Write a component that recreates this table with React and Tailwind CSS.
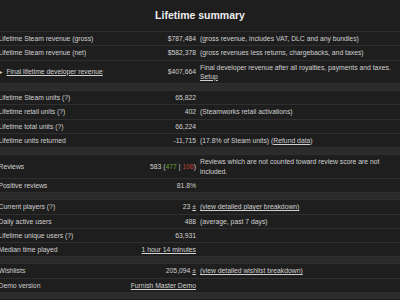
const Row = ({ label, value, desc }) => (
  <div className="flex items-center border-t border-[#2f2f2f] py-[2px] leading-[9.3px]">
    <div className="flex-1 -ml-[1.5px] whitespace-nowrap">{label}</div>
    <div className="pr-[4px] text-right whitespace-nowrap">{value}</div>
    <div className="w-[200px] shrink-0 pr-[2px]">{desc}</div>
  </div>
)

const Band = () => <div className="h-[7px] border-t border-[#2f2f2f] bg-[#2b2b2b]" />

const A = ({ children }) => <span className="underline">{children}</span>

export default function App() {
  return (
    <div
      className="w-[400px] h-[300px] overflow-hidden bg-[#1e1e1e] text-[#d0d0d0] text-[6.8px]"
      style={{ fontFamily: '"Liberation Sans", Arial, sans-serif' }}
    >
      <div className="h-[31px] flex items-center justify-center text-[10.5px] font-bold text-[#ececec]">
        Lifetime summary
      </div>

      <Row label="Lifetime Steam revenue (gross)" value="$787,484" desc="(gross revenue, includes VAT, DLC and any bundles)" />
      <Row label="Lifetime Steam revenue (net)" value="$582,378" desc="(gross revenues less returns, chargebacks, and taxes)" />
      <Row
        label={
          <span>
            <span className="text-[5px] mr-[3px]">&#9658;</span>
            <A>Final lifetime developer revenue</A>
          </span>
        }
        value="$407,664"
        desc={
          <>
            Final developer revenue after all royalties, payments and taxes.
            <br />
            <A>Setup</A>
          </>
        }
      />
      <Band />

      <Row label="Lifetime Steam units (?)" value="65,822" desc="" />
      <Row label="Lifetime retail units (?)" value="402" desc="(Steamworks retail activations)" />
      <Row label="Lifetime total units (?)" value="66,224" desc="" />
      <Row
        label="Lifetime units returned"
        value="-11,715"
        desc={
          <>
            (17.8% of Steam units) (<A>Refund data</A>)
          </>
        }
      />
      <Band />

      <Row
        label="Reviews"
        value={
          <>
            583 (<span className="text-[#66a52e]">477</span> | <span className="text-[#c8402e]">106</span>)
          </>
        }
        desc="Reviews which are not counted toward review score are not included."
      />
      <Row label="Positive reviews" value="81.8%" desc="" />
      <Band />

      <Row
        label="Current players (?)"
        value={
          <>
            23 <A>±</A>
          </>
        }
        desc={<A>(view detailed player breakdown)</A>}
      />
      <Row label="Daily active users" value="488" desc="(average, past 7 days)" />
      <Row label="Lifetime unique users (?)" value="63,931" desc="" />
      <Row label="Median time played" value={<A>1 hour 14 minutes</A>} desc="" />
      <Band />

      <Row
        label="Wishlists"
        value={
          <>
            205,094 <A>±</A>
          </>
        }
        desc={<A>(view detailed wishlist breakdown)</A>}
      />
      <Row label="Demo version" value={<A>Furnish Master Demo</A>} desc="" />
      <Band />
    </div>
  )
}
